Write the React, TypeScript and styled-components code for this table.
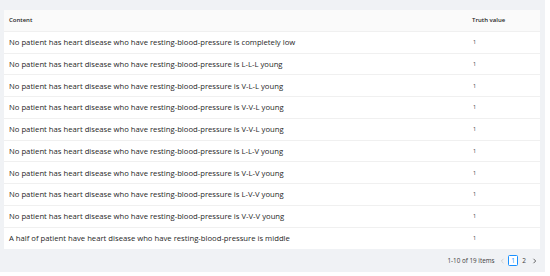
import React from 'react';
import styled, { createGlobalStyle } from 'styled-components';

const rows: { content: string; value: number }[] = [
  { content: 'No patient has heart disease who have resting-blood-pressure is completely low', value: 1 },
  { content: 'No patient has heart disease who have resting-blood-pressure is L-L-L young', value: 1 },
  { content: 'No patient has heart disease who have resting-blood-pressure is V-L-L young', value: 1 },
  { content: 'No patient has heart disease who have resting-blood-pressure is V-V-L young', value: 1 },
  { content: 'No patient has heart disease who have resting-blood-pressure is V-V-L young', value: 1 },
  { content: 'No patient has heart disease who have resting-blood-pressure is L-L-V young', value: 1 },
  { content: 'No patient has heart disease who have resting-blood-pressure is V-L-V young', value: 1 },
  { content: 'No patient has heart disease who have resting-blood-pressure is L-V-V young', value: 1 },
  { content: 'No patient has heart disease who have resting-blood-pressure is V-V-V young', value: 1 },
  { content: 'A half of patient have heart disease who have resting-blood-pressure is middle', value: 1 },
];

const App: React.FC = () => {
  return (
    <>
      <GlobalStyle />
      <Page>
        <Table>
          <HeadRow>
            <HeadCell>Content</HeadCell>
            <HeadCell>Truth value</HeadCell>
          </HeadRow>
          {rows.map((r, i) => (
            <Row key={i} $last={i === rows.length - 1}>
              <Cell>{r.content}</Cell>
              <ValueCell>{r.value}</ValueCell>
            </Row>
          ))}
        </Table>
        <Pager>
          <Total>1-10 of 19 items</Total>
          <Arrow $disabled>
            <svg width="5" height="6" viewBox="0 0 5 6">
              <path d="M3.5 0.8 L1.3 3 L3.5 5.2" fill="none" stroke="currentColor" strokeWidth="0.8" />
            </svg>
          </Arrow>
          <PageItem $active>1</PageItem>
          <PageItem>2</PageItem>
          <Arrow>
            <svg width="5" height="6" viewBox="0 0 5 6">
              <path d="M1.5 0.8 L3.7 3 L1.5 5.2" fill="none" stroke="currentColor" strokeWidth="0.8" />
            </svg>
          </Arrow>
        </Pager>
      </Page>
    </>
  );
};

const GlobalStyle = createGlobalStyle`
  body {
    margin: 0;
    background: #ffffff;
    font-family: "Open Sans", "Noto Sans", sans-serif;
  }
`;

const Page = styled.div`
  width: 545px;
  height: 272px;
  background: #f0f2f5;
  padding: 10px 5px 0 4px;
  box-sizing: border-box;
  display: flex;
  flex-direction: column;
`;

const Table = styled.div`
  background: #ffffff;
  display: flex;
  flex-direction: column;
`;

const HeadRow = styled.div`
  display: grid;
  grid-template-columns: 463px 1fr;
  height: 21.75px;
  align-items: center;
  background: #fafafa;
  border-bottom: 1px solid #f0f0f0;
  box-sizing: border-box;
`;

const HeadCell = styled.div`
  padding-left: 5px;
  font-size: 6px;
  font-weight: 600;
  color: #262626;
`;

const Row = styled.div<{ $last?: boolean }>`
  display: grid;
  grid-template-columns: 463px 1fr;
  height: 21.75px;
  align-items: center;
  border-bottom: ${({ $last }) => ($last ? 'none' : '1px solid #f0f0f0')};
  box-sizing: border-box;
`;

const Cell = styled.div`
  padding-left: 5px;
  font-size: 7.7px;
  color: #1f1f1f;
  white-space: nowrap;
`;

const ValueCell = styled.div`
  padding-left: 6px;
  font-size: 5.5px;
  color: #404040;
`;

const Pager = styled.div`
  display: flex;
  align-items: center;
  justify-content: flex-end;
  height: 27px;
  padding-right: 1px;
  gap: 1px;
`;

const Total = styled.span`
  font-size: 6.3px;
  color: #404040;
  margin-right: 2.5px;
`;

const Arrow = styled.span<{ $disabled?: boolean }>`
  display: flex;
  align-items: center;
  justify-content: center;
  width: 9px;
  height: 11px;
  color: ${({ $disabled }) => ($disabled ? '#c8c8c8' : '#404040')};
`;

const PageItem = styled.span<{ $active?: boolean }>`
  display: flex;
  align-items: center;
  justify-content: center;
  width: 10px;
  height: 11px;
  box-sizing: border-box;
  font-size: 6.5px;
  border: ${({ $active }) => ($active ? '1px solid #1890ff' : '1px solid transparent')};
  border-radius: 1.5px;
  background: ${({ $active }) => ($active ? '#ffffff' : 'transparent')};
  color: ${({ $active }) => ($active ? '#1890ff' : '#404040')};
`;

export default App;
